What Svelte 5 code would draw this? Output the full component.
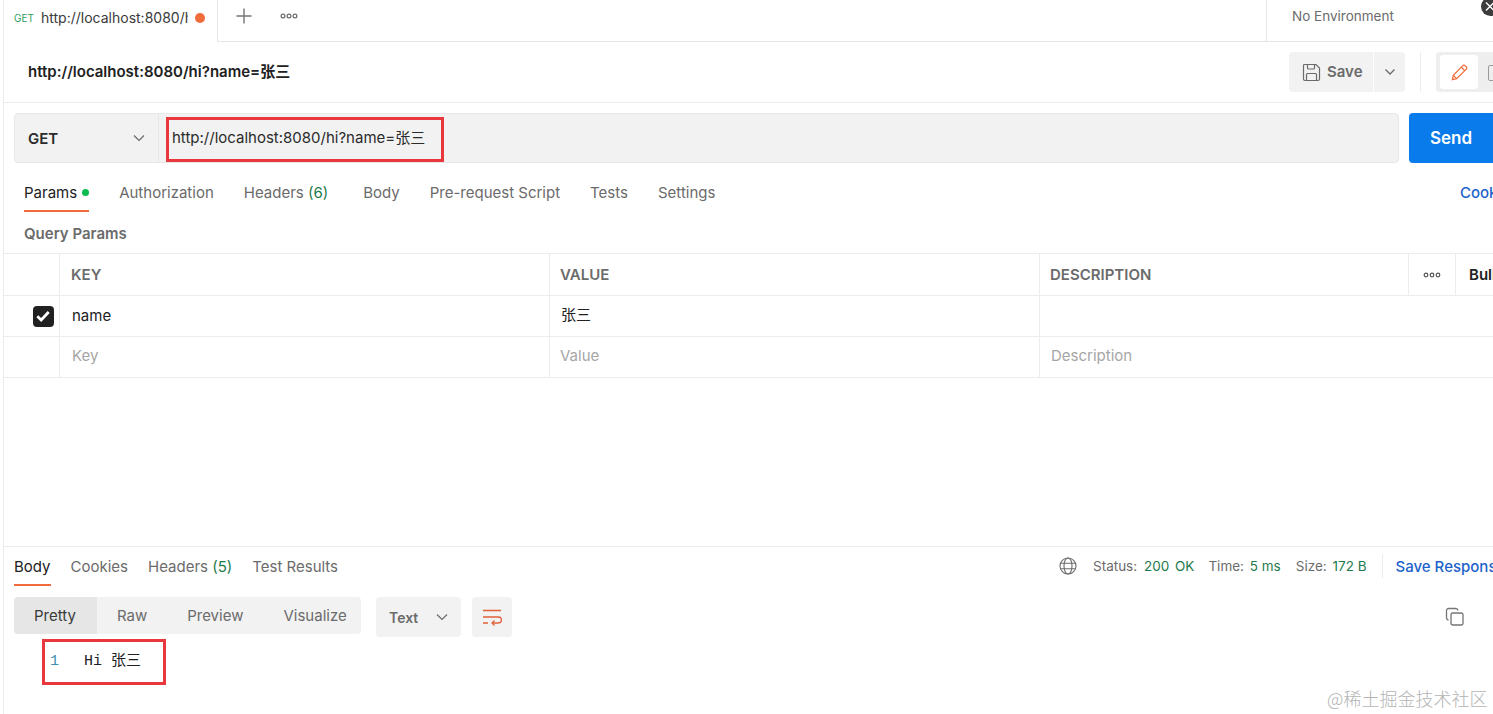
<script lang="ts">
  const requestTabs = [
    { label: 'Authorization' },
    { label: 'Headers', count: '(6)', wide: true },
    { label: 'Body' },
    { label: 'Pre-request Script' },
    { label: 'Tests' },
    { label: 'Settings' }
  ];
  const responseFormats = ['Raw', 'Preview', 'Visualize'];
  const title = 'http://localhost:8080/hi?name=张三';
</script>

<div class="app">
  <header class="tabbar">
    <div class="tab">
      <span class="get">GET</span>
      <span class="tab-url">http://localhost:8080/hi?name=张三</span>
      <span class="dot"></span>
    </div>
    <svg class="plus" width="18" height="18" viewBox="0 0 18 18"><path d="M9 1.5v15M1.5 9h15" stroke="#757575" stroke-width="1.4" fill="none" /></svg>
    <svg class="more" width="18" height="6" viewBox="0 0 18 6"><g fill="none" stroke="#6b6b6b" stroke-width="1.2"><circle cx="3" cy="3" r="1.9" /><circle cx="9" cy="3" r="1.9" /><circle cx="15" cy="3" r="1.9" /></g></svg>
    <div class="env">No Environment</div>
    <span class="close-round">
      <svg width="19" height="19" viewBox="0 0 19 19"><path d="M5 5.5l8 8M13 5.5l-8 8" stroke="#fff" stroke-width="1.4" fill="none" /></svg>
    </span>
  </header>

  <section class="title-row">
    <h1>{title}</h1>
    <div class="title-actions">
      <div class="save">
        <svg width="19" height="19" viewBox="0 0 19 19" fill="none" stroke="#6b6b6b" stroke-width="1.2"><path d="M2.5 1.5h11.5l3.5 3.5v11a1.5 1.5 0 0 1-1.5 1.5H3a1.5 1.5 0 0 1-1.5-1.5V2.5a1 1 0 0 1 1-1z" /><path d="M5.5 1.5v3.5a1 1 0 0 0 1 1h5a1 1 0 0 0 1-1V1.5M4.5 17.5v-6a1 1 0 0 1 1-1h8a1 1 0 0 1 1 1v6" /></svg>
        <span class="save-label">Save</span>
      </div>
      <div class="save-caret">
        <svg width="12" height="8" viewBox="0 0 12 8"><path d="M1.5 1.5 6 6l4.5-4.5" fill="none" stroke="#6b6b6b" stroke-width="1.3" /></svg>
      </div>
      <span class="vsep"></span>
      <div class="mode">
        <div class="mode-on">
          <svg width="19" height="19" viewBox="0 0 20 20" fill="none" stroke="#f26b3a" stroke-width="1.3"><path d="M2.5 17.5l1-4.5L13.5 2.8a1.6 1.6 0 0 1 2.3 0l1.4 1.4a1.6 1.6 0 0 1 0 2.3L7 16.5z" /><path d="M3.5 13l3.5 3.5M12 4.5l3.5 3.5" /></svg>
        </div>
        <span class="mode-off"></span>
      </div>
    </div>
  </section>

  <section class="url-row">
    <div class="url-field">
      <div class="method">
        <span>GET</span>
        <svg width="12" height="8" viewBox="0 0 12 8"><path d="M1 1.5 6 6.5l5-5" fill="none" stroke="#6b6b6b" stroke-width="1.2" /></svg>
      </div>
      <div class="url-input">{title}</div>
      <span class="red-box url-mark"></span>
    </div>
    <button class="send">Send</button>
  </section>

  <nav class="req-tabs">
    <span class="rtab active">Params<i class="green-dot"></i></span>
    {#each requestTabs as t}
      <span class="rtab" class:wide={t.wide}>{t.label}{#if t.count}&nbsp;<em>{t.count}</em>{/if}</span>
    {/each}
    <span class="cookies">Cookies</span>
  </nav>

  <div class="qp-label">Query Params</div>

  <div class="table">
    <div class="tr head">
      <div class="c check"></div>
      <div class="c col">KEY</div>
      <div class="c col">VALUE</div>
      <div class="c desc">DESCRIPTION</div>
      <div class="c dots">
        <svg width="18" height="6" viewBox="0 0 18 6"><g fill="none" stroke="#555" stroke-width="1.2"><circle cx="3" cy="3" r="1.8" /><circle cx="9" cy="3" r="1.8" /><circle cx="15" cy="3" r="1.8" /></g></svg>
      </div>
      <div class="c bulk">Bulk Edit</div>
    </div>
    <div class="tr filled">
      <div class="c check">
        <span class="box">
          <svg width="16" height="14" viewBox="0 0 14 12"><path d="M2 6.2 5.4 9.5 12 2.5" fill="none" stroke="#fff" stroke-width="2.4" /></svg>
        </span>
      </div>
      <div class="c col">name</div>
      <div class="c col">张三</div>
      <div class="c rest"></div>
    </div>
    <div class="tr ghost">
      <div class="c check"></div>
      <div class="c col">Key</div>
      <div class="c col">Value</div>
      <div class="c rest">Description</div>
    </div>
  </div>

  <div class="spacer"></div>

  <section class="response">
    <div class="res-head">
      <span class="rtab active">Body</span>
      <span class="rtab">Cookies</span>
      <span class="rtab">Headers&nbsp;<em>(5)</em></span>
      <span class="rtab">Test Results</span>
      <div class="stats">
        <svg width="18" height="18" viewBox="0 0 18 18" fill="none" stroke="#6b6b6b" stroke-width="1.1"><circle cx="9" cy="9" r="8" /><ellipse cx="9" cy="9" rx="4" ry="8" /><path d="M1.5 6.3h15M1.5 11.7h15" /></svg>
        <span class="stat first">Status: <b>200 OK</b></span>
        <span class="stat">Time: <b>5 ms</b></span>
        <span class="stat">Size: <b>172 B</b></span>
        <span class="vsep small"></span>
        <span class="save-resp">Save Response</span>
      </div>
    </div>

    <div class="res-tools">
      <div class="formats">
        <span class="fmt on">Pretty</span>
        {#each responseFormats as f}
          <span class="fmt">{f}</span>
        {/each}
      </div>
      <div class="lang">
        <span>Text</span>
        <svg width="12" height="8" viewBox="0 0 12 8"><path d="M1 1.5 6 6.5l5-5" fill="none" stroke="#6b6b6b" stroke-width="1.2" /></svg>
      </div>
      <div class="wrap">
        <svg width="20" height="18" viewBox="0 0 20 18" fill="none" stroke="#e0613a" stroke-width="1.3"><path d="M1 2.5h18M1 9h15.5a2.5 2.5 0 0 1 0 6H10M1 15h5" /><path d="M12.5 12.5 10 15l2.5 2.5" /></svg>
      </div>
      <svg class="copy" width="19" height="19" viewBox="0 0 19 19" fill="none" stroke="#757575" stroke-width="1.3"><rect x="6" y="6" width="12" height="12" rx="2" /><path d="M3.5 13A2.5 2.5 0 0 1 1.5 10.5V3.5a2 2 0 0 1 2-2h7A2.5 2.5 0 0 1 13 3.5" /></svg>
    </div>

    <div class="code">
      <span class="ln">1</span>
      <span class="txt">Hi 张三</span>
      <span class="red-box code-mark"></span>
    </div>
  </section>

  <div class="watermark">@稀土掘金技术社区</div>
</div>

<style>
  :global(body) {
    margin: 0;
    background: #fff;
    overflow: hidden;
  }

  .app {
    position: relative;
    width: 1493px;
    height: 714px;
    overflow: hidden;
    display: flex;
    flex-direction: column;
    box-sizing: border-box;
    padding-left: 3px;
    font-family: Inter, "Noto Sans CJK SC", sans-serif;
    font-size: 15px;
    color: #212121;
    background: linear-gradient(#ececec, #ececec) 3px 0 / 1px 100% no-repeat, #fff;
  }

  .tabbar {
    height: 41px;
    flex: none;
    display: flex;
    align-items: flex-start;
    border-bottom: 1px solid #e6e6e6;
  }
  .tab {
    width: 214px;
    height: 42px;
    box-sizing: border-box;
    margin-left: 1px;
    padding: 0 0 7px 10px;
    display: flex;
    align-items: center;
    background: #fff;
    border-right: 1px solid #e6e6e6;
  }
  .get {
    width: 27px;
    flex: none;
    font-size: 10px;
    color: #2f9e5d;
  }
  .tab-url {
    width: 147px;
    flex: none;
    overflow: hidden;
    white-space: nowrap;
    font-size: 14px;
    line-height: 20px;
    color: #3a3a3a;
  }
  .dot {
    width: 10px;
    height: 10px;
    margin-left: 7px;
    border-radius: 50%;
    background: #f26b3a;
  }
  .plus {
    margin: 7px 0 0 17px;
  }
  .more {
    margin: 13px 0 0 27px;
  }
  .env {
    margin-left: auto;
    width: 227px;
    height: 41px;
    box-sizing: border-box;
    padding: 8px 0 0 25px;
    border-left: 1px solid #e6e6e6;
    font-size: 13.5px;
    line-height: 17px;
    color: #6b6b6b;
  }
  .close-round {
    position: absolute;
    top: -3px;
    left: 1481px;
    width: 19px;
    height: 19px;
    border-radius: 50%;
    background: #3c3c3c;
  }
  .close-round svg {
    display: block;
  }

  .title-row {
    height: 60px;
    flex: none;
    display: flex;
    align-items: center;
    border-bottom: 1px solid #ececec;
    padding-left: 25px;
  }
  h1 {
    margin: 0;
    font-size: 15px;
    line-height: 20px;
    font-weight: 600;
    color: #212121;
  }
  .title-actions {
    margin-left: auto;
    display: flex;
    align-items: center;
    width: 204px;
    flex: none;
  }
  .save {
    width: 84px;
    height: 40px;
    flex: none;
    box-sizing: border-box;
    padding-left: 13px;
    display: flex;
    align-items: center;
    gap: 6px;
    background: #f2f2f2;
    border-radius: 4px 0 0 4px;
    font-weight: 600;
    color: #6b6b6b;
  }
  .save-label {
    margin-bottom: 2px;
  }
  .save-caret {
    width: 31px;
    height: 40px;
    flex: none;
    margin-left: 1px;
    display: flex;
    align-items: center;
    justify-content: center;
    background: #f2f2f2;
    border-radius: 0 4px 4px 0;
  }
  .vsep {
    width: 1px;
    height: 40px;
    flex: none;
    margin: 0 15px;
    background: #ececec;
  }
  .vsep.small {
    height: 24px;
    margin: 0 13px 0 15px;
  }
  .mode {
    flex: none;
    width: 70px;
    height: 40px;
    box-sizing: border-box;
    padding: 3px 4px;
    display: flex;
    gap: 10px;
    background: #eee;
    border-radius: 4px;
  }
  .mode-on {
    width: 38px;
    height: 34px;
    flex: none;
    display: flex;
    align-items: center;
    justify-content: center;
    background: #fff;
    border-radius: 3px;
  }
  .mode-off {
    width: 12px;
    height: 14px;
    flex: none;
    margin-top: 10px;
    border: 1px solid #999;
    border-radius: 2px;
  }

  .url-row {
    margin: 10px 0 0 11px;
    height: 50px;
    flex: none;
    display: flex;
    gap: 10px;
  }
  .url-field {
    position: relative;
    width: 1385px;
    box-sizing: border-box;
    flex: none;
    display: flex;
    background: #f2f2f2;
    border: 1px solid #e8e8e8;
    border-radius: 4px;
  }
  .method {
    width: 144px;
    box-sizing: border-box;
    padding: 0 13px;
    display: flex;
    align-items: center;
    justify-content: space-between;
    border-right: 1px solid #e8e8e8;
    font-weight: 600;
    color: #2b2b2b;
  }
  .url-input {
    padding: 0 0 3px 13px;
    display: flex;
    align-items: center;
    color: #2b2b2b;
  }
  .red-box {
    position: absolute;
    box-sizing: border-box;
    border: 3px solid #e8383d;
    pointer-events: none;
  }
  .url-mark {
    left: 151px;
    top: 3px;
    width: 278px;
    height: 45px;
  }
  .send {
    width: 100px;
    flex: none;
    padding: 0 0 1px;
    text-align: left;
    text-indent: 21px;
    border: 0;
    border-radius: 4px;
    background: #0a7bea;
    color: #fff;
    font: 600 17px Inter, sans-serif;
  }

  .req-tabs {
    position: relative;
    height: 49px;
    flex: none;
    box-sizing: border-box;
    padding: 20px 0 0 21px;
    display: flex;
    gap: 30px;
    overflow: hidden;
  }
  .rtab {
    position: relative;
    line-height: 19px;
    color: #6b6b6b;
    white-space: nowrap;
  }
  .rtab.wide {
    margin-right: 5px;
  }
  .rtab em {
    font-style: normal;
    color: #1f7a4d;
  }
  .rtab.active {
    color: #212121;
  }
  .rtab.active::after {
    content: "";
    position: absolute;
    left: 0;
    right: 0;
    top: 27px;
    height: 2px;
    background: #f26b3a;
  }
  .green-dot {
    display: inline-block;
    width: 7px;
    height: 7px;
    margin-left: 5px;
    vertical-align: 2px;
    border-radius: 50%;
    background: #0cbb52;
  }
  .cookies {
    position: absolute;
    left: 1457px;
    top: 20px;
    font-weight: 500;
    line-height: 19px;
    color: #1d63c9;
  }

  .qp-label {
    height: 41px;
    flex: none;
    box-sizing: border-box;
    padding: 12px 0 0 21px;
    line-height: 19px;
    font-weight: 600;
    color: #6b6b6b;
  }

  .table {
    flex: none;
    border-top: 1px solid #ececec;
  }
  .tr {
    height: 40px;
    display: flex;
    border-bottom: 1px solid #ececec;
  }
  .tr.head {
    height: 41px;
    font-weight: 600;
    color: #6b6b6b;
  }
  .c {
    flex: none;
    box-sizing: border-box;
    display: flex;
    align-items: center;
    border-right: 1px solid #ececec;
    white-space: nowrap;
    line-height: 20px;
  }
  .check {
    width: 57px;
    justify-content: center;
    padding-left: 22px;
  }
  .col {
    width: 490px;
    padding-left: 11px;
  }
  .col + .col {
    padding-left: 10px;
  }
  .tr:not(.head) .col {
    padding: 0 0 2px 12px;
  }
  .tr.filled .col:nth-child(2) {
    padding-bottom: 0;
  }
  .tr.filled .col + .col {
    padding-left: 11px;
  }
  .tr.ghost .col + .col {
    padding-left: 10px;
  }
  .desc {
    width: 369px;
    padding-left: 10px;
  }
  .dots {
    width: 47px;
    justify-content: center;
  }
  .bulk {
    border-right: 0;
    padding-left: 13px;
    color: #212121;
    font-weight: 600;
  }
  .rest {
    border-right: 0;
    flex: 1;
    padding: 0 0 2px 11px;
  }
  .ghost {
    color: #a6a6a6;
  }
  .box {
    width: 21px;
    height: 21px;
    flex: none;
    display: flex;
    align-items: center;
    justify-content: center;
    background: #212121;
    border-radius: 4px;
    margin: 0 -2px 0 0;
  }

  .spacer {
    flex: 1;
  }

  .response {
    height: 168px;
    flex: none;
    box-sizing: border-box;
    border-top: 1px solid #ececec;
    padding-left: 11px;
  }
  .res-head {
    position: relative;
    height: 39px;
    box-sizing: border-box;
    padding-top: 10px;
    display: flex;
    gap: 20px;
  }
  .stats {
    position: absolute;
    left: 1045px;
    top: 7px;
    display: flex;
    align-items: center;
    white-space: nowrap;
    font-size: 13.5px;
    color: #6b6b6b;
  }
  .stat {
    margin-left: 15px;
  }
  .stat.first {
    margin: 0 -1px 0 16px;
  }
  .stat b {
    font-weight: 400;
    color: #1f7a4d;
    margin-left: 2px;
  }
  .stat.first b {
    margin-left: 3px;
    word-spacing: 2px;
  }
  .save-resp {
    font-size: 15px;
    font-weight: 500;
    color: #1d63c9;
  }

  .res-tools {
    position: relative;
    height: 40px;
    margin-top: 11px;
    display: flex;
    align-items: flex-start;
  }
  .formats {
    width: 347px;
    height: 37px;
    flex: none;
    display: flex;
    background: #f2f2f2;
    border-radius: 4px;
    overflow: hidden;
    color: #6b6b6b;
  }
  .fmt {
    padding: 0 20px;
    line-height: 37px;
  }
  .fmt.on {
    padding-right: 21px;
    background: #e6e6e6;
    color: #3a3a3a;
  }
  .lang {
    width: 85px;
    height: 40px;
    flex: none;
    margin-left: 15px;
    box-sizing: border-box;
    padding: 0 13px;
    display: flex;
    align-items: center;
    justify-content: space-between;
    background: #f2f2f2;
    border-radius: 4px;
    font-weight: 600;
    font-size: 14px;
    color: #6b6b6b;
  }
  .wrap {
    width: 40px;
    height: 40px;
    flex: none;
    margin-left: 11px;
    display: flex;
    align-items: center;
    justify-content: center;
    background: #f2f2f2;
    border-radius: 4px;
  }
  .copy {
    position: absolute;
    left: 1431px;
    top: 10px;
  }

  .code {
    position: relative;
    height: 46px;
    box-sizing: border-box;
    padding-top: 3px;
    display: flex;
    align-items: center;
    font-family: "Liberation Mono", "Noto Sans CJK SC", monospace;
    font-size: 15px;
    line-height: 20px;
  }
  .ln {
    margin-left: 36px;
    width: 34px;
    color: #3f8fae;
  }
  .txt {
    color: #212121;
  }
  .code-mark {
    left: 28px;
    top: 2px;
    width: 124px;
    height: 46px;
  }

  .watermark {
    position: absolute;
    left: 1327px;
    top: 686px;
    font-family: "Noto Sans CJK SC", sans-serif;
    font-size: 18px;
    font-weight: 300;
    line-height: 24px;
    white-space: nowrap;
    color: #b4b4b4;
  }
</style>
